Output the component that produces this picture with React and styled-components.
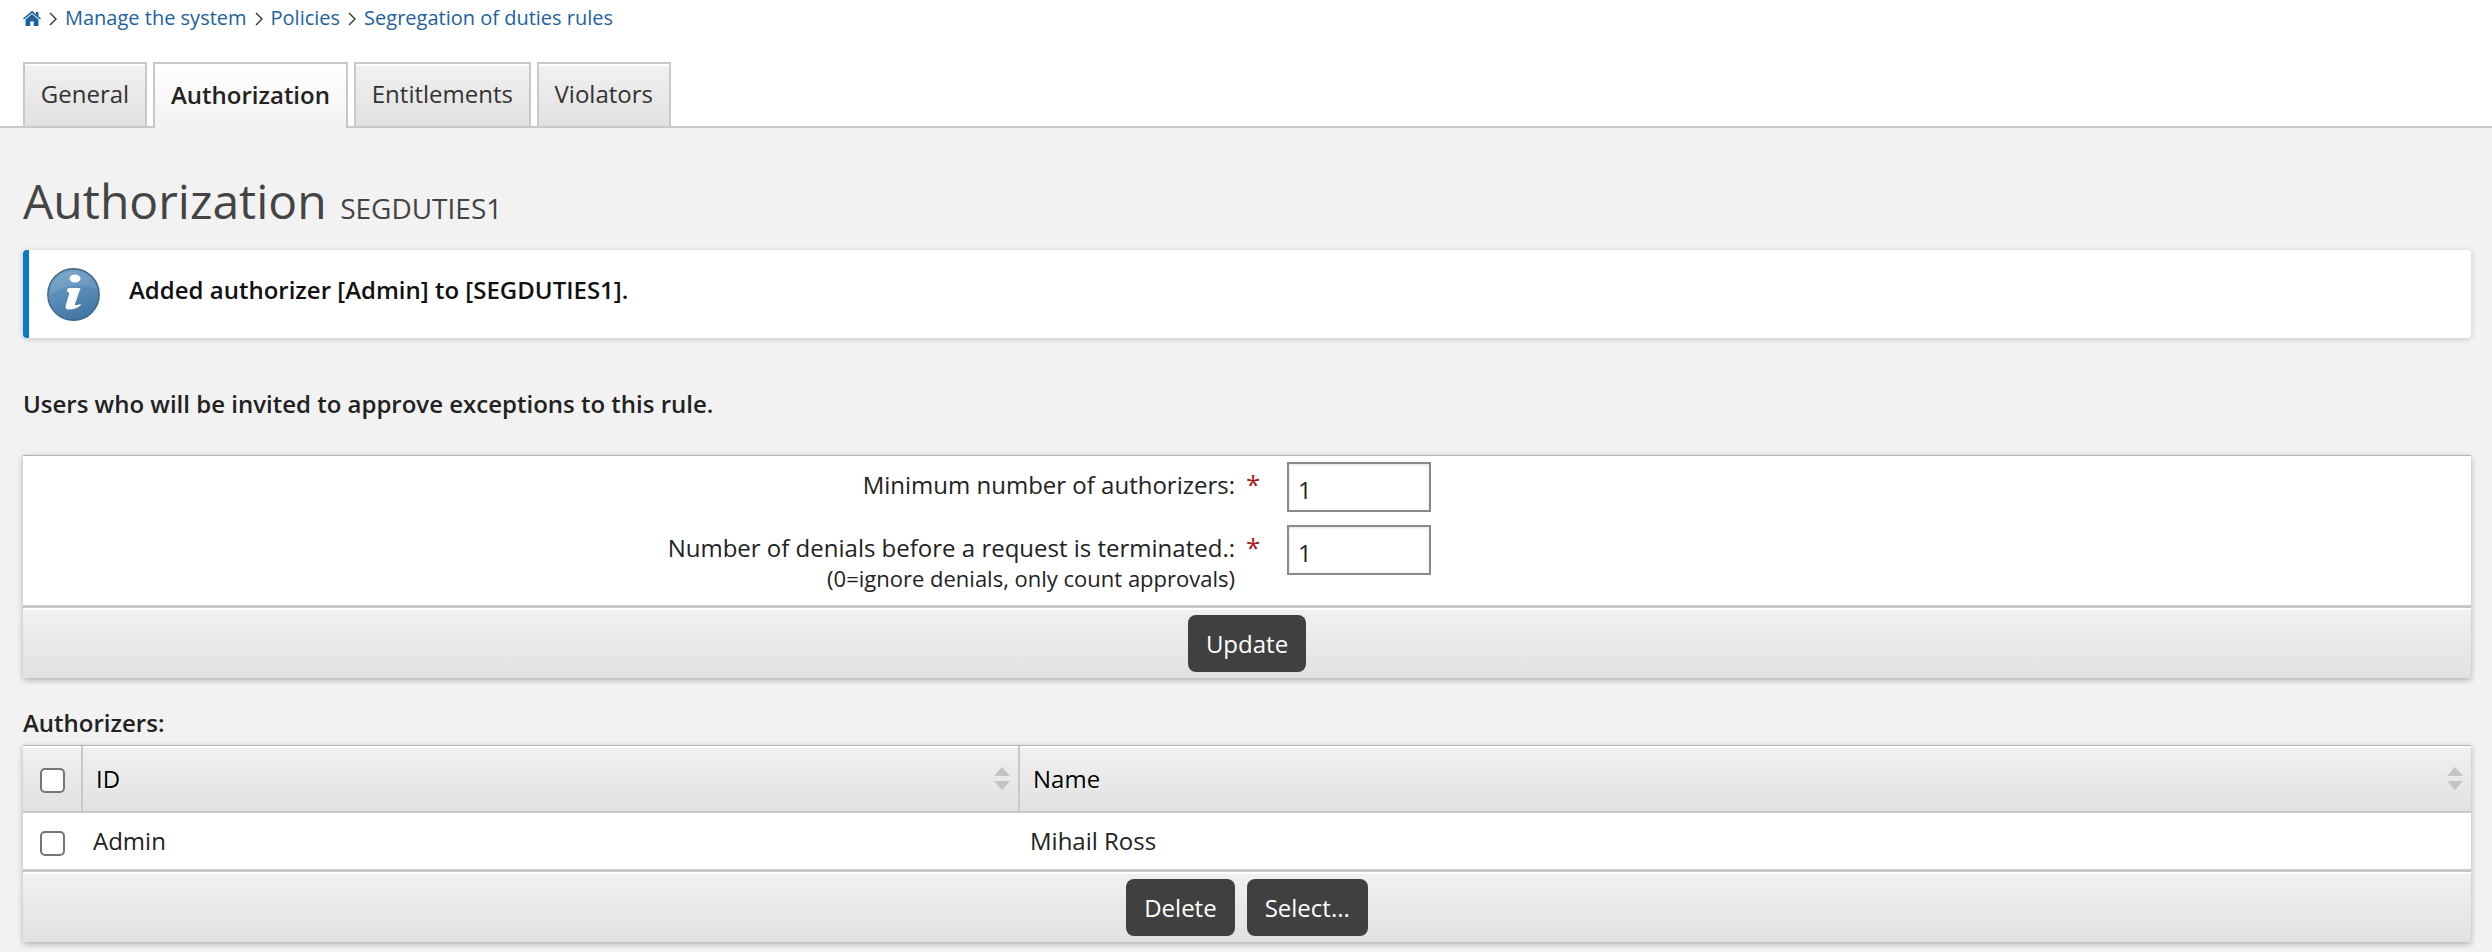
import React from 'react'
import styled, { createGlobalStyle } from 'styled-components'

const GlobalStyle = createGlobalStyle`
  html, body {
    margin: 0;
    padding: 0;
    background: #f2f2f2;
    font-family: "Open Sans", "Noto Sans", sans-serif;
    font-size: 24px;
    color: #222;
  }
  * { box-sizing: border-box; }
`

const panelGradient = 'linear-gradient(to bottom, #f1f1f1, #e1e1e1)'

const Page = styled.div`
  width: 2492px;
  height: 952px;
  overflow: hidden;
`

const TopBar = styled.div`
  background: #fff;
  height: 128px;
  border-bottom: 2px solid #c8c8c8;
  padding: 0 23px;
  display: flex;
  flex-direction: column;
`

const Breadcrumbs = styled.div`
  flex: none;
  height: 62px;
  padding-top: 3px;
  display: flex;
  align-items: flex-start;
  font-size: 20px;
  line-height: 30px;
`

const Crumb = styled.a`
  color: #1e619f;
  text-decoration: none;
`

const Chevron = styled.svg`
  width: 9px;
  height: 14px;
  margin: 9px 8px 0 7px;
  fill: none;
  stroke: #333;
  stroke-width: 1.4;
`

const HomeIcon = styled.svg`
  width: 18px;
  height: 16px;
  margin-top: 7px;
  fill: #1e619f;
`

const TabRow = styled.div`
  flex: none;
  display: flex;
  align-items: flex-start;
  gap: 6px;
  height: 64px;
`

const Tab = styled.div`
  height: ${p => (p.$active ? '66px' : '64px')};
  padding: 0 ${p => (p.$active ? '16px' : '15.8px')} 3px;
  display: flex;
  align-items: center;
  font-size: 24px;
  font-weight: ${p => (p.$active ? 600 : 400)};
  color: ${p => (p.$active ? '#222' : '#333')};
  border: 2px solid #c8c8c8;
  border-bottom: none;
  background: ${p => (p.$active ? 'linear-gradient(to bottom, #fff, #f2f2f2)' : panelGradient)};
  box-shadow: inset 0 2px 0 #fff;
  position: relative;
`

const Content = styled.div`
  padding: 0 21px 0 23px;
`

const Title = styled.h1`
  margin: 0;
  height: 122px;
  padding-top: 39px;
  font-size: 48px;
  line-height: 68px;
  font-weight: 400;
  color: #444;
`

const TitleSub = styled.small`
  font-size: 28px;
  margin-left: 1px;
  color: #444;
`

const Notice = styled.div`
  height: 88px;
  background: #fff;
  border-left: 6px solid #0a78c8;
  border-radius: 4px;
  box-shadow: 0 1px 6px rgba(0, 0, 0, 0.18);
  display: flex;
  align-items: center;
  padding-left: 18px;
  gap: 29px;
  font-size: 24px;
  font-weight: 600;
  color: #111;
`

const NoticeText = styled.span`
  margin-bottom: 10px;
`

const InfoIcon = styled.svg`
  width: 53px;
  height: 53px;
  flex: none;
`

const Intro = styled.p`
  margin: 51px 0 0;
  height: 66px;
  font-size: 24px;
  line-height: 30px;
  font-weight: 600;
  color: #222;
`

const Panel = styled.div`
  background: #fff;
  border-top: 1px solid #b4b4b4;
  box-shadow: 0 2px 6px rgba(0, 0, 0, 0.28);
`

const FormBody = styled.div`
  height: 149px;
  padding-top: 6px;
  display: flex;
  flex-direction: column;
  gap: 13px;
`

const FormRow = styled.div`
  display: grid;
  grid-template-columns: 1212px 52px 144px;
  align-items: start;
`

const LabelBox = styled.div`
  text-align: right;
  font-size: 24px;
  line-height: 30px;
  padding-top: 8px;
  color: #222;
`

const Hint = styled.div`
  font-size: 22px;
  line-height: 30px;
`

const Star = styled.div`
  color: #a31d1d;
  font-size: 26px;
  line-height: 30px;
  padding-top: 7px;
  padding-left: 11px;
`

const NumberInput = styled.input`
  width: 144px;
  height: 50px;
  border: 2px solid #8a8a8a;
  background: #fff;
  box-shadow: inset 0 1px 3px rgba(0, 0, 0, 0.12);
  padding: 4px 0 0 9px;
  font: 24px "Open Sans", sans-serif;
  color: #222;
  outline: none;
`

const Footer = styled.div`
  height: 73px;
  border-top: 3px solid #c8c8c8;
  box-shadow: inset 0 2px 0 #fff;
  background: ${panelGradient};
  display: flex;
  justify-content: center;
  align-items: center;
  gap: 12px;
`

const Button = styled.button`
  height: 57px;
  padding: 0 18px;
  border: none;
  border-radius: 8px;
  background: #404040;
  color: #fff;
  font: 24px "Open Sans", sans-serif;
`

const SectionLabel = styled.div`
  margin-top: 30px;
  height: 37px;
  font-size: 24px;
  line-height: 30px;
  font-weight: 600;
  color: #222;
`

const Table = styled.table`
  width: 100%;
  border-collapse: collapse;
  table-layout: fixed;
`

const HeadCell = styled.th`
  height: 66px;
  padding: 0 0 0 13px;
  text-align: left;
  font-size: 24px;
  font-weight: 500;
  color: #000;
  background: ${panelGradient};
  box-shadow: inset 0 2px 0 #fff;
  border-right: 2px solid #c8c8c8;
  border-bottom: 2px solid #c8c8c8;
  text-shadow: 1px 1px 1px #fff;
  &:last-child { border-right: none; }
`

const HeadInner = styled.div`
  display: flex;
  justify-content: space-between;
  align-items: center;
  padding-right: 8px;
`

const Cell = styled.td`
  height: 57px;
  padding: 0 0 2px 11px;
  font-size: 24px;
  color: #222;
`

const CheckCell = styled.td`
  padding: 5px 0 0 17px;
`

const CheckHead = styled.th`
  padding: 3px 0 0 17px;
  background: ${panelGradient};
  box-shadow: inset 0 2px 0 #fff;
  border-right: 2px solid #c8c8c8;
  border-bottom: 2px solid #c8c8c8;
`

const Check = styled.span`
  display: block;
  width: 25px;
  height: 25px;
  border: 2px solid #767676;
  border-radius: 5px;
  background: #fff;
`

const SortIcon = styled.svg`
  width: 16px;
  height: 23px;
  fill: #c4c4c4;
`

const Sort = () => (
  <SortIcon viewBox="0 0 16 23">
    <path d="M8 0l8 9H0zM0 14h16l-8 9z" />
  </SortIcon>
)

const Sep = () => (
  <Chevron viewBox="0 0 9 14">
    <path d="M2 1l6 6-6 6" />
  </Chevron>
)

export default function App() {
  return (
    <Page>
      <GlobalStyle />
      <TopBar>
        <Breadcrumbs>
          <HomeIcon viewBox="0 0 18 16">
            <path d="M9 .8l4 3.4V2h2.4v4.2L18 8.500l-1 1.100L9 2.900 1 9.600 0 8.500zM9 4l6.500 5.400V16h-4.700v-4.500H7.200V16H2.500V9.400z" />
          </HomeIcon>
          <Sep />
          <Crumb>Manage the system</Crumb>
          <Sep />
          <Crumb>Policies</Crumb>
          <Sep />
          <Crumb>Segregation of duties rules</Crumb>
        </Breadcrumbs>
        <TabRow>
          <Tab>General</Tab>
          <Tab $active>Authorization</Tab>
          <Tab>Entitlements</Tab>
          <Tab>Violators</Tab>
        </TabRow>
      </TopBar>
      <Content>
        <Title>
          Authorization <TitleSub>SEGDUTIES1</TitleSub>
        </Title>
        <Notice>
          <InfoIcon viewBox="0 0 53 53">
            <defs>
              <linearGradient id="infoFill" x1="0.3" y1="0" x2="0.7" y2="1">
                <stop offset="0" stopColor="#6f9fc6" />
                <stop offset="1" stopColor="#3f75a4" />
              </linearGradient>
            </defs>
            <circle cx="26.500" cy="26.500" r="25.700" fill="url(#infoFill)" stroke="#3c6788" strokeWidth="1.400" />
            <path d="M3 27C4 12 14 3 26.500 3S49 12 50 22C38 14 16 16 3 27z" fill="#fff" opacity="0.1" />
            <ellipse cx="28" cy="10.500" rx="5.500" ry="4" fill="#fff" />
            <path d="M21 20h12.500L28 36c-.5 1.500 1 1.500 2 1l4-1-1 2c-3 2.500-8 3.500-11 3.500-3.500 0-4-2-3-5l3-10c.5-1.500-.5-3-2.500-3z" fill="#fff" />
          </InfoIcon>
          <NoticeText>Added authorizer [Admin] to [SEGDUTIES1].</NoticeText>
        </Notice>
        <Intro>Users who will be invited to approve exceptions to this rule.</Intro>
        <Panel>
          <FormBody>
            <FormRow>
              <LabelBox>Minimum number of authorizers:</LabelBox>
              <Star>*</Star>
              <NumberInput defaultValue="1" />
            </FormRow>
            <FormRow>
              <LabelBox>
                Number of denials before a request is terminated.:
                <Hint>(0=ignore denials, only count approvals)</Hint>
              </LabelBox>
              <Star>*</Star>
              <NumberInput defaultValue="1" />
            </FormRow>
          </FormBody>
          <Footer>
            <Button>Update</Button>
          </Footer>
        </Panel>
        <SectionLabel>Authorizers:</SectionLabel>
        <Panel>
          <Table>
            <colgroup>
              <col style={{ width: '59px' }} />
              <col style={{ width: '937px' }} />
              <col />
            </colgroup>
            <thead>
              <tr>
                <CheckHead><Check /></CheckHead>
                <HeadCell>
                  <HeadInner>ID<Sort /></HeadInner>
                </HeadCell>
                <HeadCell>
                  <HeadInner>Name<Sort /></HeadInner>
                </HeadCell>
              </tr>
            </thead>
            <tbody>
              <tr>
                <CheckCell><Check /></CheckCell>
                <Cell>Admin</Cell>
                <Cell>Mihail Ross</Cell>
              </tr>
            </tbody>
          </Table>
          <Footer>
            <Button>Delete</Button>
            <Button>Select...</Button>
          </Footer>
        </Panel>
      </Content>
    </Page>
  )
}
